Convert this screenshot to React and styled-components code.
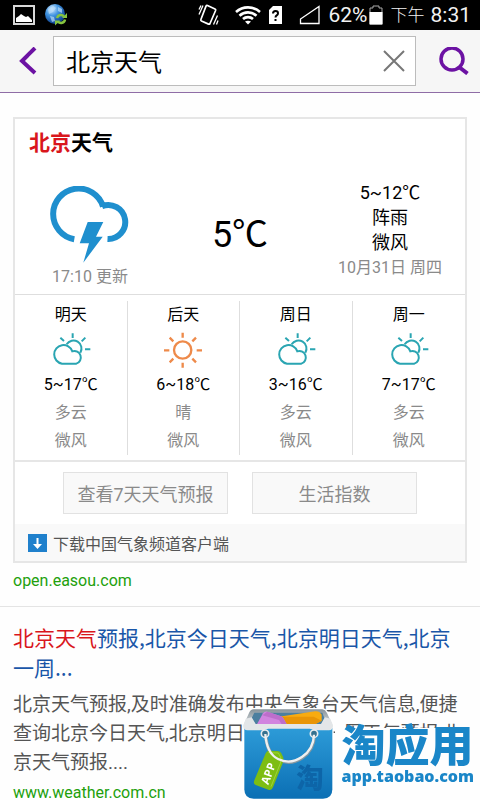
import React from "react";
import styled, { createGlobalStyle } from "styled-components";

const forecast = [
  { day: "明天", icon: "cloudy", temp: "5~17℃", sky: "多云", wind: "微风" },
  { day: "后天", icon: "sunny", temp: "6~18℃", sky: "晴", wind: "微风" },
  { day: "周日", icon: "cloudy", temp: "3~16℃", sky: "多云", wind: "微风" },
  { day: "周一", icon: "cloudy", temp: "7~17℃", sky: "多云", wind: "微风" },
];

function StatusBar() {
  return (
    <StatusBarStyled>
      <StatusGroup $gap={10}>
        <svg width="22" height="20" viewBox="0 0 22 20">
          <rect x="1" y="1" width="20" height="18" fill="none" stroke="#d8d8d8" strokeWidth="2" />
          <path d="M3 17v-4l3-2 2-2 3 2 2 1 2-1 4 4v2z" fill="#fff" />
        </svg>
        <svg width="23" height="22" viewBox="0 0 23 22">
          <defs>
            <radialGradient id="globe" cx="35%" cy="25%" r="75%">
              <stop offset="0" stopColor="#d5ecff" />
              <stop offset="0.45" stopColor="#3f93e0" />
              <stop offset="1" stopColor="#0d3f8e" />
            </radialGradient>
          </defs>
          <circle cx="10" cy="10" r="10" fill="url(#globe)" />
          <path d="M3 5l5-3 3 2-3 4-4 2zM13 3l4 2v4l-4-2zM5 12l4 1 1 4-3 1z" fill="#b9dcf8" opacity="0.7" />
          <path d="M12 14a4 4 0 0 1 7-1.500M20 15.500a4 4 0 0 1-7 2" fill="none" stroke="#86c440" strokeWidth="2.5" />
          <path d="M17 14h5V9zM15 16.500h-5v5z" fill="#86c440" />
        </svg>
      </StatusGroup>
      <StatusGroup $gap={7}>
        <svg width="30" height="22" viewBox="0 0 30 22" fill="none" stroke="#fff">
          <path d="M9.500 1.500L17 5q1 .5.600 1.500L12 19.500q-.5 1-1.500.600L3.500 17q-1-.5-.6-1.500L8 2.200q.5-1 1.500-.7z" strokeWidth="1.700" />
          <path d="M1 10.500l4-9M1 5.500l2-4M15.500 20.500l4-9M18.500 20.500l1.500-4" strokeWidth="1.300" />
        </svg>
        <svg width="26" height="19" viewBox="0 0 26 19" fill="none" stroke="#fff" strokeWidth="2.600">
          <path d="M1 6a18 18 0 0 1 24 0M4.500 9.700a12.500 12.500 0 0 1 17 0M8 13a7.500 7.500 0 0 1 10 0" />
          <path d="M10 15.500q3-1.600 6 0l-3 3z" fill="#fff" stroke="none" />
        </svg>
        <svg width="24" height="18" viewBox="0 0 24 18">
          <path d="M5 0h9v18H1V4z" fill="#fff" />
          <path d="M5 7.500q0-2.500 2.500-2.500T10 7.200q0 1.300-1.300 2.200-1.200.8-1.200 2M7.500 13v2" fill="none" stroke="#000" strokeWidth="2" />
        </svg>
        <svg width="23" height="20" viewBox="0 0 23 20">
          <path d="M20 1.500V18.500H1.500V14z" fill="none" stroke="#fff" strokeWidth="1.300" />
        </svg>
        <StatusGroup $gap={1}>
          <span>62%</span>
          <svg width="15" height="20" viewBox="0 0 15 20">
            <path d="M1 19V3h3V1h6v2h3v16z" fill="#000" stroke="#aaa" strokeWidth="1" />
            <path d="M0.500 7h13v12.500h-13z" fill="#fff" />
          </svg>
        </StatusGroup>
        <StatusGroup $gap={6}>
          <Meridiem>下午</Meridiem>
          <span>8:31</span>
        </StatusGroup>
      </StatusGroup>
    </StatusBarStyled>
  );
}

function SearchHeader() {
  return (
    <HeaderStyled>
      <IconButton aria-label="返回">
        <svg width="18" height="28" viewBox="0 0 18 28" fill="none" stroke="#6c12a3" strokeWidth="4">
          <path d="M16 1L3 14l13 12" />
        </svg>
      </IconButton>
      <SearchBox>
        <SearchInput type="text" aria-label="搜索" defaultValue="北京天气" />
        <IconButton aria-label="清除">
          <svg width="24" height="22" viewBox="0 0 24 22" fill="none" stroke="#777" strokeWidth="2">
            <path d="M2 1l20 20M22 1L2 21" />
          </svg>
        </IconButton>
      </SearchBox>
      <IconButton aria-label="搜索">
        <svg width="30" height="28" viewBox="0 0 30 28" fill="none" stroke="#6c12a3" strokeWidth="3.500">
          <circle cx="13" cy="12" r="11" />
          <path d="M20 20l8.500 6.500" strokeWidth="4" />
        </svg>
      </IconButton>
    </HeaderStyled>
  );
}

function StormIcon() {
  return (
    <svg width="82" height="78" viewBox="48 186 82 78">
      <path
        d="M73.300 239.200A25.500 25.500 0 1 1 102 206.500M101 206.200A17 17 0 1 1 106.500 239"
        fill="none"
        stroke="#1f8fce"
        strokeWidth="6"
      />
      <path d="M86.700 222h15.600L95 236.700h6.700L82.300 262.700 88 243.300h-9.300z" fill="#1f8fce" />
    </svg>
  );
}

function DayIcon({ name }) {
  if (name === "sunny") {
    return (
      <svg width="40" height="38" viewBox="489 123 120 114" fill="none" stroke="#ee8a4a" strokeWidth="7">
        <circle cx="548" cy="180" r="26" />
        <path d="M548 128v15M548 218v15M492 181h16M590 181h16M509 143l11 11M588 143l-11 11M509 217l11-11M588 217l-11-11" />
      </svg>
    );
  }
  return (
    <svg width="40" height="38" viewBox="153 123 120 114" fill="none" stroke="#2aa5b2" strokeWidth="6">
      <path d="M186 221A28 28 0 1 1 217 184A19 19 0 1 1 229 221Z" />
      <path d="M200 163A24 24 0 0 1 241 188M218 130v14M181 143l11 10M256 143l-11 11M255 178h16" />
    </svg>
  );
}

function WeatherCard() {
  return (
    <Card>
      <CardTitle>
        <Mark>北京</Mark>天气
      </CardTitle>
      <Current>
        <CurrentCell $end>
          <StormIcon />
          <Caption>17:10 更新</Caption>
        </CurrentCell>
        <Temperature>5℃</Temperature>
        <CurrentCell>
          <Detail>5~12℃</Detail>
          <Detail>阵雨</Detail>
          <Detail>微风</Detail>
          <Caption>10月31日 周四</Caption>
        </CurrentCell>
      </Current>
      <Forecast>
        {forecast.map((item) => (
          <Day key={item.day}>
            <DayText>{item.day}</DayText>
            <DayIcon name={item.icon} />
            <DayText>{item.temp}</DayText>
            <DayText $muted>{item.sky}</DayText>
            <DayText $muted>{item.wind}</DayText>
          </Day>
        ))}
      </Forecast>
      <Actions>
        <ActionButton>查看7天天气预报</ActionButton>
        <ActionButton>生活指数</ActionButton>
      </Actions>
      <DownloadLink href="#download">
        <svg width="19" height="18" viewBox="0 0 19 18">
          <path d="M0 0h19v18H0z" fill="#1f80cc" />
          <path d="M8.500 4h2v6H14l-4.500 5L5 10h3.500z" fill="#fff" />
        </svg>
        下载中国气象频道客户端
      </DownloadLink>
    </Card>
  );
}

function StoreBadge() {
  return (
    <BadgeStyled href="#store">
      <svg width="92" height="92" viewBox="0 -4 276 276">
        <defs>
          <linearGradient id="bag" x1="0" y1="0" x2="0" y2="1">
            <stop offset="0" stopColor="#2d9bd8" />
            <stop offset="1" stopColor="#0b6fb4" />
          </linearGradient>
          <linearGradient id="rim" x1="0" y1="0" x2="0" y2="1">
            <stop offset="0" stopColor="#87939a" />
            <stop offset="1" stopColor="#eef0f1" />
          </linearGradient>
        </defs>
        <path d="M32 0H238Q247 1 252 11L268 42V240Q268 268 240 268H32Q4 268 4 240V42L18 11Q22 1 32 0Z" fill="#fff" stroke="#fff" strokeWidth="8" />
        <path d="M32 0H238Q247 1 252 11L268 46V60H2V46L18 11Q22 1 32 0Z" fill="url(#rim)" />
        <path d="M34 10H238L244 26 234 48H38L26 26Z" fill="#4c7f9f" />
        <path d="M108 22L216 6Q224 5 230 9L236 16V34L206 50H131Z" fill="#f8ab10" />
        <path d="M108 22L212 22 236 34 206 50H131Z" fill="#e99506" />
        <path d="M41 46L60 12Q64 6 73 7L114 21Q119 23 122 28L134 50H41Z" fill="#d184df" />
        <path d="M73 7L114 21Q119 23 122 28L134 50H120L108 32 58 18Z" fill="#bd6ecb" />
        <path d="M4 56H268V240Q268 268 240 268H32Q4 268 4 240Z" fill="url(#bag)" />
        <path d="M8 28L26 24 38 44H234L246 24 262 28 270 48Q271 63 258 63H212Q207 58 200 58H76Q70 58 62 63H14Q0 63 1 48Z" fill="#e3e6e8" />
        <BagMark x="160" y="236">淘</BagMark>
        <path d="M68 76C70 106 78 137 106 151C155 175 212 136 214 78" fill="none" stroke="#87979f" strokeWidth="10" />
        <circle cx="66" cy="73" r="11" fill="#35718f" stroke="#e9edef" strokeWidth="5" />
        <circle cx="213" cy="73" r="11" fill="#35718f" stroke="#e9edef" strokeWidth="5" />
        <path d="M68 132Q71 123 80 124L104 125Q110 125 114 130L120 142Q122 146 121 152L119 162 90 234Q86 244 76 241L40 228Q29 224 34 213Z" fill="#7dbd12" />
        <path d="M76 130L106 131 114 146 112 162 84 232" fill="none" stroke="#9dd43a" strokeWidth="3" />
        <path d="M67 74C69 104 77 135 105 149C154 173 211 134 213 76" fill="none" stroke="#eef0f1" strokeWidth="7" />
        <TagText transform="translate(76 228) rotate(-70)">APP</TagText>
      </svg>
      <BadgeText>
        <BadgeName>淘应用</BadgeName>
        <BadgeDomain>app.taobao.com</BadgeDomain>
      </BadgeText>
    </BadgeStyled>
  );
}

function App() {
  return (
    <>
      <GlobalStyle />
      <StatusBar />
      <SearchHeader />
      <Results>
        <WeatherCard />
        <SourceLink href="#easou">open.easou.com</SourceLink>
      </Results>
      <Result>
        <ResultTitle>
          <a href="#weather">
            <Mark>北京天气</Mark>预报,北京今日天气,北京明日天气,北京一周...
          </a>
        </ResultTitle>
        <Snippet>
          北京天气预报,及时准确发布中央气象台天气信息,便捷查询北京今日天气,北京明日天气,北京一周天气预报,北京天气预报....
        </Snippet>
        <SourceLink href="#weather">www.weather.com.cn</SourceLink>
      </Result>
      <StoreBadge />
    </>
  );
}

const GlobalStyle = createGlobalStyle`
  * {
    box-sizing: border-box;
  }

  html {
    scrollbar-width: none;
  }

  body {
    margin: 0;
    background: #fefefe;
    color: #000;
    font-family: Roboto, "Noto Sans CJK SC", sans-serif;
    font-size: 16px;
  }

  svg {
    display: block;
    flex: none;
  }

  button,
  input {
    font: inherit;
  }

  a {
    color: inherit;
    text-decoration: none;
  }
`;

const StatusBarStyled = styled.div`
  display: flex;
  align-items: center;
  justify-content: space-between;
  height: 30px;
  padding: 0 9px 0 13px;
  background: #000;
  color: #f2f2f2;
  font-size: 21px;
  line-height: 30px;
`;

const StatusGroup = styled.div`
  display: flex;
  align-items: center;
  gap: ${(props) => props.$gap}px;
`;

const Meridiem = styled.span`
  font-size: 17px;
  font-weight: 300;
`;

const HeaderStyled = styled.header`
  display: flex;
  align-items: center;
  height: 63px;
  padding: 0 11px 0 19px;
  gap: 16px;
  background: #f6f6f6;
  border-bottom: 1px solid #8f6da6;
`;

const IconButton = styled.button`
  flex: none;
  padding: 0;
  border: 0;
  background: none;
`;

const SearchBox = styled.div`
  flex: 1;
  display: flex;
  align-items: center;
  height: 50px;
  margin-right: 7px;
  padding: 0 9px 0 12px;
  background: #fff;
  border: 1px solid #bcbcbc;
`;

const SearchInput = styled.input`
  flex: 1;
  min-width: 0;
  padding: 0 0 2px;
  border: 0;
  outline: 0;
  background: none;
  font-size: 24px;
`;

const Results = styled.main`
  padding: 24px 13px 15px;
  border-bottom: 1px solid #e4e4e4;
`;

const Card = styled.section`
  margin-bottom: 8px;
  border: 2px solid #e6e6e6;
  background: #fff;
`;

const CardTitle = styled.h1`
  margin: 0;
  padding: 12px 14px 0;
  font-size: 21px;
  font-weight: 700;
  line-height: 24px;
`;

const Mark = styled.span`
  color: #d9161c;
`;

const Current = styled.div`
  display: grid;
  grid-template-columns: repeat(3, 1fr);
  padding: 25px 0 5px;
  border-bottom: 1px solid #dedede;
`;

const CurrentCell = styled.div`
  display: flex;
  flex-direction: column;
  align-items: center;
  padding-top: ${(props) => (props.$end ? 6 : 0)}px;
`;

const Temperature = styled.div`
  align-self: center;
  font-size: 36px;
  line-height: 36px;
  text-align: center;
`;

const Detail = styled.div`
  font-size: 18px;
  line-height: 25px;
`;

const Caption = styled.div`
  color: #8a8a8a;
  line-height: 25px;
`;

const Forecast = styled.div`
  display: grid;
  grid-template-columns: repeat(4, 1fr);
  padding: 6px 0 5px;
  border-bottom: 2px solid #e6e6e6;
`;

const Day = styled.div`
  display: flex;
  flex-direction: column;
  align-items: center;
  border-right: 1px solid #dedede;

  &:last-child {
    border-right: 0;
  }

  svg {
    margin: 2px 0;
  }
`;

const DayText = styled.div`
  color: ${(props) => (props.$muted ? "#8a8a8a" : "#000")};
  line-height: 28px;
`;

const Actions = styled.div`
  display: flex;
  justify-content: center;
  gap: 24px;
  padding: 10px;
`;

const ActionButton = styled.button`
  width: 165px;
  height: 42px;
  padding: 0;
  border: 1px solid #e2e2e2;
  background: #f9f9f9;
  color: #8a8a8a;
  font-size: 18px;
`;

const DownloadLink = styled.a`
  display: flex;
  align-items: center;
  gap: 6px;
  height: 37px;
  padding: 0 13px;
  background: #f9f9f9;
  color: #555;
`;

const SourceLink = styled.a`
  display: block;
  color: #22a00c;
  line-height: 20px;
`;

const Result = styled.article`
  padding: 15px 13px 0;
`;

const ResultTitle = styled.h2`
  margin: 0;
  color: #1a56a8;
  font-family: "Noto Sans CJK SC", sans-serif;
  font-size: 21px;
  font-weight: 400;
  line-height: 30px;
`;

const Snippet = styled.p`
  margin: 8px 0 6px;
  color: #555;
  font-size: 19px;
  line-height: 29px;
`;

const BadgeStyled = styled.a`
  position: fixed;
  right: 0;
  bottom: 0;
  display: flex;
  align-items: flex-end;
  color: #1a86c8;
`;

const BagMark = styled.text`
  fill: #0d65a8;
  font-size: 82px;
  font-weight: 900;
`;

const TagText = styled.text`
  fill: #fff;
  font-family: "Open Sans", sans-serif;
  font-size: 34px;
  font-weight: 700;
`;

const BadgeText = styled.div`
  display: flex;
  flex-direction: column;
  padding: 0 6px 14px;
  background: #fefefe;
`;

const BadgeName = styled.span`
  font-size: 44px;
  font-weight: 900;
  line-height: 38px;
`;

const BadgeDomain = styled.span`
  font-family: "Open Sans", sans-serif;
  font-size: 16px;
  font-weight: 800;
  line-height: 20px;
`;

export default App;
